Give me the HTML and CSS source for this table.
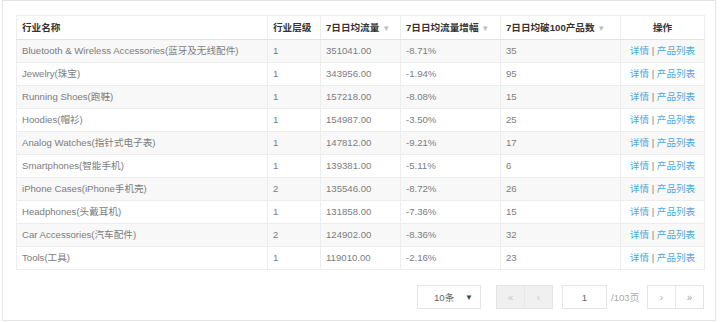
FILE: index.html
```html
<!DOCTYPE html>
<html lang="zh">
<head>
<meta charset="utf-8">
<link rel="stylesheet" href="styles.css">
</head>
<body>
<div class="frame">
  <table class="grid">
    <colgroup>
      <col class="c1"><col class="c2"><col class="c3"><col class="c4"><col class="c5"><col class="c6">
    </colgroup>
    <thead>
      <tr>
        <th>行业名称</th>
        <th>行业层级</th>
        <th>7日日均流量 <span class="caret">▾</span></th>
        <th>7日日均流量增幅 <span class="caret">▾</span></th>
        <th>7日日均破100产品数 <span class="caret">▾</span></th>
        <th class="center">操作</th>
      </tr>
    </thead>
    <tbody>
      <tr><td>Bluetooth &amp; Wireless Accessories(蓝牙及无线配件)</td><td>1</td><td>351041.00</td><td>-8.71%</td><td>35</td><td class="center"><a>详情</a> | <a>产品列表</a></td></tr>
      <tr><td>Jewelry(珠宝)</td><td>1</td><td>343956.00</td><td>-1.94%</td><td>95</td><td class="center"><a>详情</a> | <a>产品列表</a></td></tr>
      <tr><td>Running Shoes(跑鞋)</td><td>1</td><td>157218.00</td><td>-8.08%</td><td>15</td><td class="center"><a>详情</a> | <a>产品列表</a></td></tr>
      <tr><td>Hoodies(帽衫)</td><td>1</td><td>154987.00</td><td>-3.50%</td><td>25</td><td class="center"><a>详情</a> | <a>产品列表</a></td></tr>
      <tr><td>Analog Watches(指针式电子表)</td><td>1</td><td>147812.00</td><td>-9.21%</td><td>17</td><td class="center"><a>详情</a> | <a>产品列表</a></td></tr>
      <tr><td>Smartphones(智能手机)</td><td>1</td><td>139381.00</td><td>-5.11%</td><td>6</td><td class="center"><a>详情</a> | <a>产品列表</a></td></tr>
      <tr><td>iPhone Cases(iPhone手机壳)</td><td>2</td><td>135546.00</td><td>-8.72%</td><td>26</td><td class="center"><a>详情</a> | <a>产品列表</a></td></tr>
      <tr><td>Headphones(头戴耳机)</td><td>1</td><td>131858.00</td><td>-7.36%</td><td>15</td><td class="center"><a>详情</a> | <a>产品列表</a></td></tr>
      <tr><td>Car Accessories(汽车配件)</td><td>2</td><td>124902.00</td><td>-8.36%</td><td>32</td><td class="center"><a>详情</a> | <a>产品列表</a></td></tr>
      <tr><td>Tools(工具)</td><td>1</td><td>119010.00</td><td>-2.16%</td><td>23</td><td class="center"><a>详情</a> | <a>产品列表</a></td></tr>
    </tbody>
  </table>
  <div class="pager">
    <div class="select"><span>10条</span><span class="tri">▼</span></div>
    <div class="btns disabled"><span class="btn">«</span><span class="btn">‹</span></div>
    <div class="page-input">1</div>
    <span class="total">/103页</span>
    <div class="btns"><span class="btn">›</span><span class="btn">»</span></div>
  </div>
</div>
</body>
</html>
```
FILE: styles.css
```css
html, body {
  margin: 0;
  padding: 0;
  background: #fff;
}
body {
  font-family: "Liberation Sans", Arial, "Noto Sans CJK SC", sans-serif;
  font-size: 9.6px;
  color: #7d7d7d;
}
.frame {
  margin-left: 2px;
  width: 714px;
  height: 321px;
  border: 1px solid #e4e4e4;
  box-sizing: border-box;
  padding: 14px 11px 0 13px;
}
.grid {
  width: 688px;
  border-collapse: collapse;
  table-layout: fixed;
}
.c1 { width: 251px; }
.c2 { width: 53px; }
.c3 { width: 80px; }
.c4 { width: 100px; }
.c5 { width: 120px; }
.c6 { width: 84px; }
.grid th, .grid td {
  border: 1px solid #ededed;
  padding: 0 5px;
  height: 22px;
  text-align: left;
  white-space: nowrap;
  overflow: hidden;
  font-weight: normal;
  line-height: 12px;
}
.grid th {
  height: 23px;
  color: #333;
  font-weight: bold;
  border-bottom: 1px solid #e2e2e2;
}
.grid tbody tr:nth-child(odd) td {
  background: #f8f8f8;
}
.caret {
  color: #bbb;
  font-weight: normal;
  font-size: 9px;
  margin-left: 2px;
}
.center {
  text-align: center !important;
}
.grid a {
  color: #4fa8de;
}
.pager {
  display: flex;
  align-items: center;
  justify-content: flex-end;
  margin-top: 15px;
  height: 24px;
  color: #999;
}
.select {
  width: 64px;
  height: 24px;
  box-sizing: border-box;
  border: 1px solid #e4e4e4;
  display: flex;
  align-items: center;
  justify-content: space-between;
  padding: 0 7px 0 16px;
  color: #666;
}
.tri {
  font-size: 8px;
  color: #444;
}
.btns {
  display: flex;
  margin-left: 15px;
  border: 1px solid #e4e4e4;
  height: 24px;
  box-sizing: border-box;
}
.btns .btn {
  width: 27px;
  display: flex;
  align-items: center;
  justify-content: center;
  color: #aaa;
  font-size: 10px;
}
.btns .btn + .btn {
  border-left: 1px solid #e8e8e8;
}
.btns.disabled {
  background: #f0f0f0;
}
.btns.disabled .btn {
  color: #c8c8c8;
}
.page-input {
  margin-left: 9px;
  width: 45px;
  height: 24px;
  box-sizing: border-box;
  border: 1px solid #e4e4e4;
  display: flex;
  align-items: center;
  justify-content: center;
  color: #666;
}
.total {
  margin-left: 4px;
  width: 36px;
  color: #aaa;
}
.total + .btns {
  margin-left: 0;
}
```
